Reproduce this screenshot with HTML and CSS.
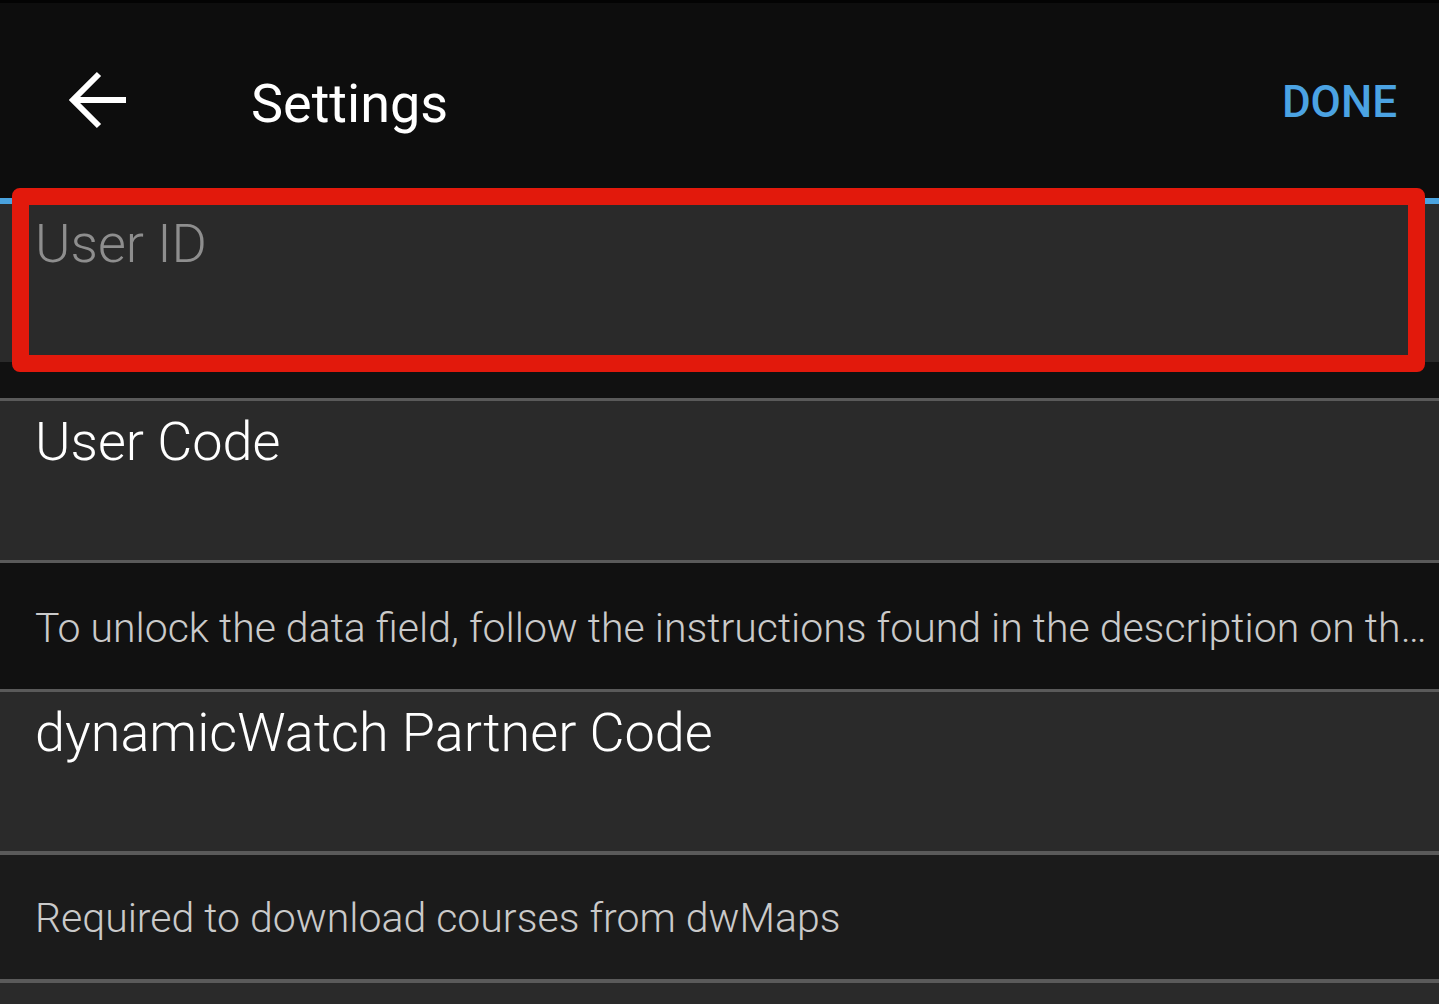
FILE: index.html
```html
<!DOCTYPE html>
<html lang="en">
<head>
<meta charset="utf-8">
<title>Settings</title>
<link rel="stylesheet" href="styles.css">
</head>
<body>
<div class="screen">
  <header class="appbar">
    <svg class="back" width="58" height="58" viewBox="0 0 58 58" aria-hidden="true">
      <path d="M58 29 H5 M31 3 L5 29 L31 55" fill="none" stroke="#ffffff" stroke-width="6" stroke-linejoin="miter"/>
    </svg>
    <h1 class="title">Settings</h1>
    <span class="done">DONE</span>
  </header>

  <div class="field field-focused">
    <span class="placeholder">User ID</span>
  </div>
  <div class="gap"></div>
  <div class="sep"></div>
  <div class="field">
    <span class="value">User Code</span>
  </div>
  <div class="sep"></div>
  <div class="desc">
    <p class="desc-text">To unlock the data field, follow the instructions found in the description on th…</p>
  </div>
  <div class="sep"></div>
  <div class="field">
    <span class="value">dynamicWatch Partner Code</span>
  </div>
  <div class="sep sep-thick"></div>
  <div class="desc desc-alt">
    <p class="desc-text">Required to download courses from dwMaps</p>
  </div>
  <div class="sep sep-thick"></div>

  <div class="highlight"></div>
</div>
</body>
</html>
```

FILE: styles.css
```css
html, body {
  margin: 0;
  padding: 0;
}

body {
  background: #2a2a2a;
  font-family: Roboto, "Noto Sans", "Liberation Sans", sans-serif;
  overflow: hidden;
}

.screen {
  position: relative;
  width: 1439px;
  height: 1004px;
  overflow: hidden;
}

.appbar {
  display: flex;
  align-items: flex-start;
  box-sizing: border-box;
  height: 198px;
  background: #0d0d0d;
  border-top: 3px solid #030303;
}

.back {
  display: block;
  margin-left: 68px;
  margin-top: 68px;
  flex: none;
}

.title {
  margin: 69px 0 0 125px;
  font-size: 54px;
  line-height: 64px;
  font-weight: 400;
  color: #ffffff;
}

.done {
  margin: 73px 42px 0 auto;
  font-size: 44px;
  line-height: 52px;
  font-weight: 500;
  color: #4ba3e3;
}

.field {
  box-sizing: border-box;
  height: 159px;
  padding: 9px 0 0 35px;
  background: #2a2a2a;
  font-size: 54px;
  line-height: 64px;
  font-weight: 300;
}

.field-focused {
  height: 164px;
  padding-top: 8px;
  border-top: 6px solid #4aa3df;
}

.placeholder {
  color: #8e8e8e;
}

.value {
  color: #ffffff;
}

.gap {
  height: 36px;
  background: #111111;
}

.sep {
  height: 3px;
  background: #5a5a5a;
}

.sep-thick {
  height: 4px;
}

.desc {
  box-sizing: border-box;
  height: 126px;
  padding: 41px 8px 0 35px;
  background: #111111;
}

.desc-alt {
  height: 124px;
  padding-top: 39px;
  background: #1b1b1b;
}

.desc-text {
  margin: 0;
  font-size: 41px;
  line-height: 48px;
  font-weight: 300;
  color: #cacaca;
  white-space: nowrap;
}

.highlight {
  position: absolute;
  left: 12px;
  top: 188px;
  width: 1413px;
  height: 184px;
  box-sizing: border-box;
  border: 17px solid #e2190c;
  border-radius: 8px;
}
```
